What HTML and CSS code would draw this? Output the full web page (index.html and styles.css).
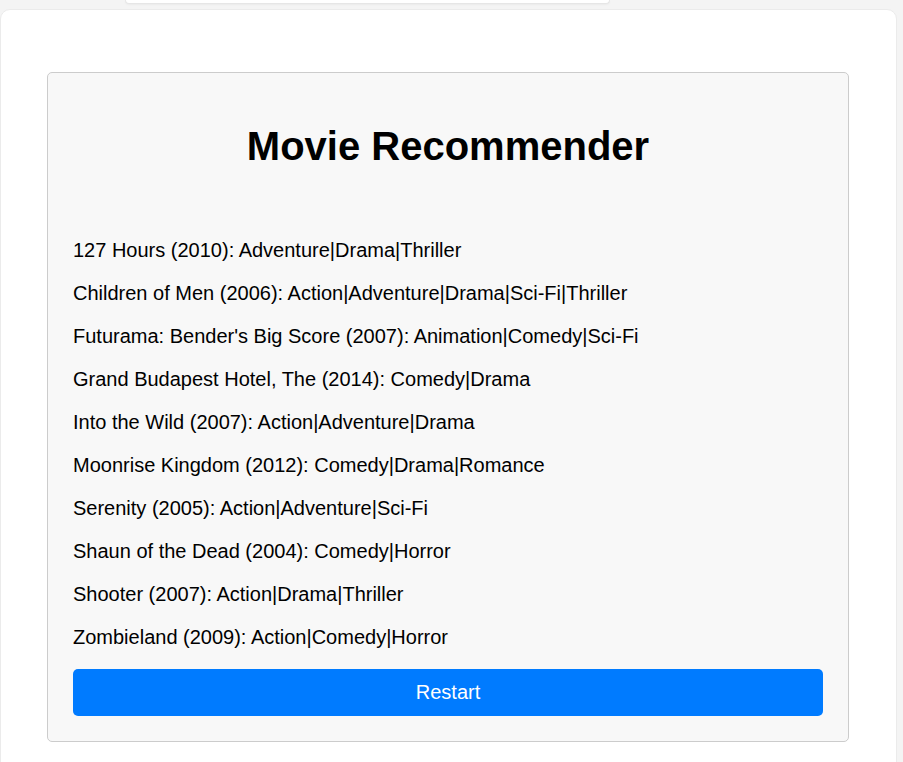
FILE: index.html
```html
<!DOCTYPE html>
<html lang="en">
<head>
<meta charset="utf-8">
<title>Movie Recommender</title>
<link rel="stylesheet" href="styles.css">
</head>
<body>
<div class="topbar"></div>
<main class="card">
  <section class="panel">
    <h1 class="title">Movie Recommender</h1>
    <div class="list">
      <div class="item">127 Hours (2010): Adventure|Drama|Thriller</div>
      <div class="item">Children of Men (2006): Action|Adventure|Drama|Sci-Fi|Thriller</div>
      <div class="item">Futurama: Bender's Big Score (2007): Animation|Comedy|Sci-Fi</div>
      <div class="item">Grand Budapest Hotel, The (2014): Comedy|Drama</div>
      <div class="item">Into the Wild (2007): Action|Adventure|Drama</div>
      <div class="item">Moonrise Kingdom (2012): Comedy|Drama|Romance</div>
      <div class="item">Serenity (2005): Action|Adventure|Sci-Fi</div>
      <div class="item">Shaun of the Dead (2004): Comedy|Horror</div>
      <div class="item">Shooter (2007): Action|Drama|Thriller</div>
      <div class="item">Zombieland (2009): Action|Comedy|Horror</div>
    </div>
    <button class="restart" type="button">Restart</button>
  </section>
</main>
</body>
</html>
```

FILE: styles.css
```css
* {
  box-sizing: border-box;
}

html, body {
  margin: 0;
  padding: 0;
}

body {
  background: #f4f4f4;
  font-family: "Liberation Sans", Arial, sans-serif;
  color: #000;
  overflow: hidden;
}

.topbar {
  width: 485px;
  height: 4px;
  margin-left: 125px;
  background: #fff;
  border: 1px solid #e6e6e6;
  border-top: none;
  border-radius: 0 0 10px 10px;
  box-shadow: 0 1px 2px rgba(0, 0, 0, 0.04);
}

.card {
  width: 897px;
  min-height: 800px;
  margin-top: 5px;
  padding: 62px 47px 40px 46px;
  background: #fff;
  border: 1px solid #ebebeb;
  border-radius: 10px;
}

.panel {
  background: #f8f8f8;
  border: 1px solid #cccccc;
  border-radius: 5px;
  padding: 0 25px 25px;
}

.title {
  margin: 50px 0 0;
  font-size: 40px;
  line-height: 46px;
  font-weight: bold;
  text-align: center;
}

.list {
  display: flex;
  flex-direction: column;
  gap: 20px;
  margin-top: 70px;
}

.item {
  font-size: 20px;
  line-height: 23px;
}

.restart {
  display: block;
  width: 100%;
  margin-top: 20px;
  padding: 12px 0;
  font-family: "Liberation Sans", Arial, sans-serif;
  font-size: 20px;
  line-height: 23px;
  color: #fff;
  background: #007bff;
  border: none;
  border-radius: 5px;
}
```
